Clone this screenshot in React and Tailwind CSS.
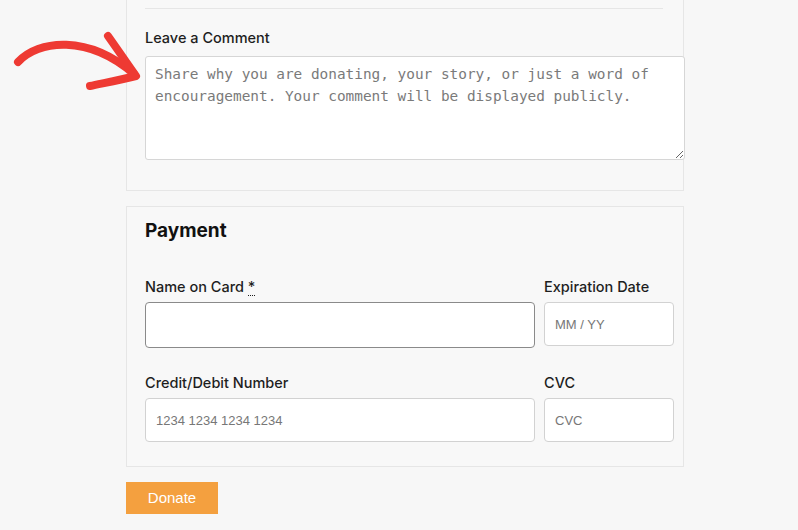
function Arrow() {
    return (
        <svg className="absolute left-0 top-0" width="150" height="100" viewBox="0 0 150 100" fill="none">
            <path d="M18 62 C 38 40, 88 34, 134 74" stroke="#ee3a33" strokeWidth="8" strokeLinecap="round" />
            <path d="M108 36 C 118 50, 126 62, 136 76 C 120 80, 104 83, 90 86" stroke="#ee3a33" strokeWidth="8" strokeLinecap="round" strokeLinejoin="round" />
        </svg>
    );
}

function Field({ label, required, placeholder, dark, h }) {
    return (
        <div className="flex flex-col">
            <label className="text-[14.5px] leading-5 font-medium text-[#1e1e1e] mb-[5px]">
                {label}
                {required && (
                    <>
                        {' '}
                        <abbr title="required" className="no-underline border-b border-dotted border-[#1e1e1e]">*</abbr>
                    </>
                )}
            </label>
            <input
                placeholder={placeholder}
                className={`w-full ${h} bg-white rounded-[4px] border px-[10px] text-[13px] outline-none placeholder:text-[#777] ${dark ? 'border-[#8a8a8a]' : 'border-[#d2d2d2]'}`}
                style={{ fontFamily: '"Liberation Sans", Arial, sans-serif' }}
            />
        </div>
    );
}

export default function App() {
    return (
        <div className="relative min-h-[530px] w-[798px] bg-[#f7f7f7] overflow-hidden" style={{ fontFamily: 'Inter, "Noto Sans", sans-serif' }}>
            <Arrow />
            <div className="ml-[126px] w-[558px]">
                <div className="border border-t-0 border-[#e6e6e6] bg-[#f8f8f8] pl-[18px] pr-[20px] pt-2 pb-[30px]">
                    <div className="h-px bg-[#e6e6e6]" />
                    <div className="mt-[19px] text-[14.5px] leading-5 font-medium text-[#1e1e1e]">Leave a Comment</div>
                    <textarea
                        className="mt-2 block w-[540px] h-[104px] bg-white border border-[#d6d6d6] rounded-[3px] px-[9px] py-[6px] text-[14.4px] leading-[22px] text-[#333] placeholder:text-[#7a7a7a] outline-none"
                        style={{ fontFamily: '"DejaVu Sans Mono", monospace' }}
                        placeholder="Share why you are donating, your story, or just a word of encouragement. Your comment will be displayed publicly."
                    />
                </div>

                <div className="mt-[15px] border border-[#e6e6e6] bg-[#f8f8f8] pl-[18px] pr-[9px] pt-[10px] pb-[24px]">
                    <h2 className="text-[19px] leading-7 font-bold text-[#111]">Payment</h2>
                    <div className="mt-[32px] grid grid-cols-[390px_130px] gap-x-[9px] gap-y-[25px]">
                        <Field label="Name on Card" required dark h="h-[46px]" />
                        <Field label="Expiration Date" placeholder="MM / YY" h="h-[44px]" />
                        <Field label="Credit/Debit Number" placeholder="1234 1234 1234 1234" h="h-[44px]" />
                        <Field label="CVC" placeholder="CVC" h="h-[44px]" />
                    </div>
                </div>

                <button
                    className="mt-[15px] w-[92px] h-8 bg-[#f4a03f] text-white text-[15px]"
                    style={{ fontFamily: '"Liberation Sans", Arial, sans-serif' }}
                >
                    Donate
                </button>
            </div>
        </div>
    );
}
